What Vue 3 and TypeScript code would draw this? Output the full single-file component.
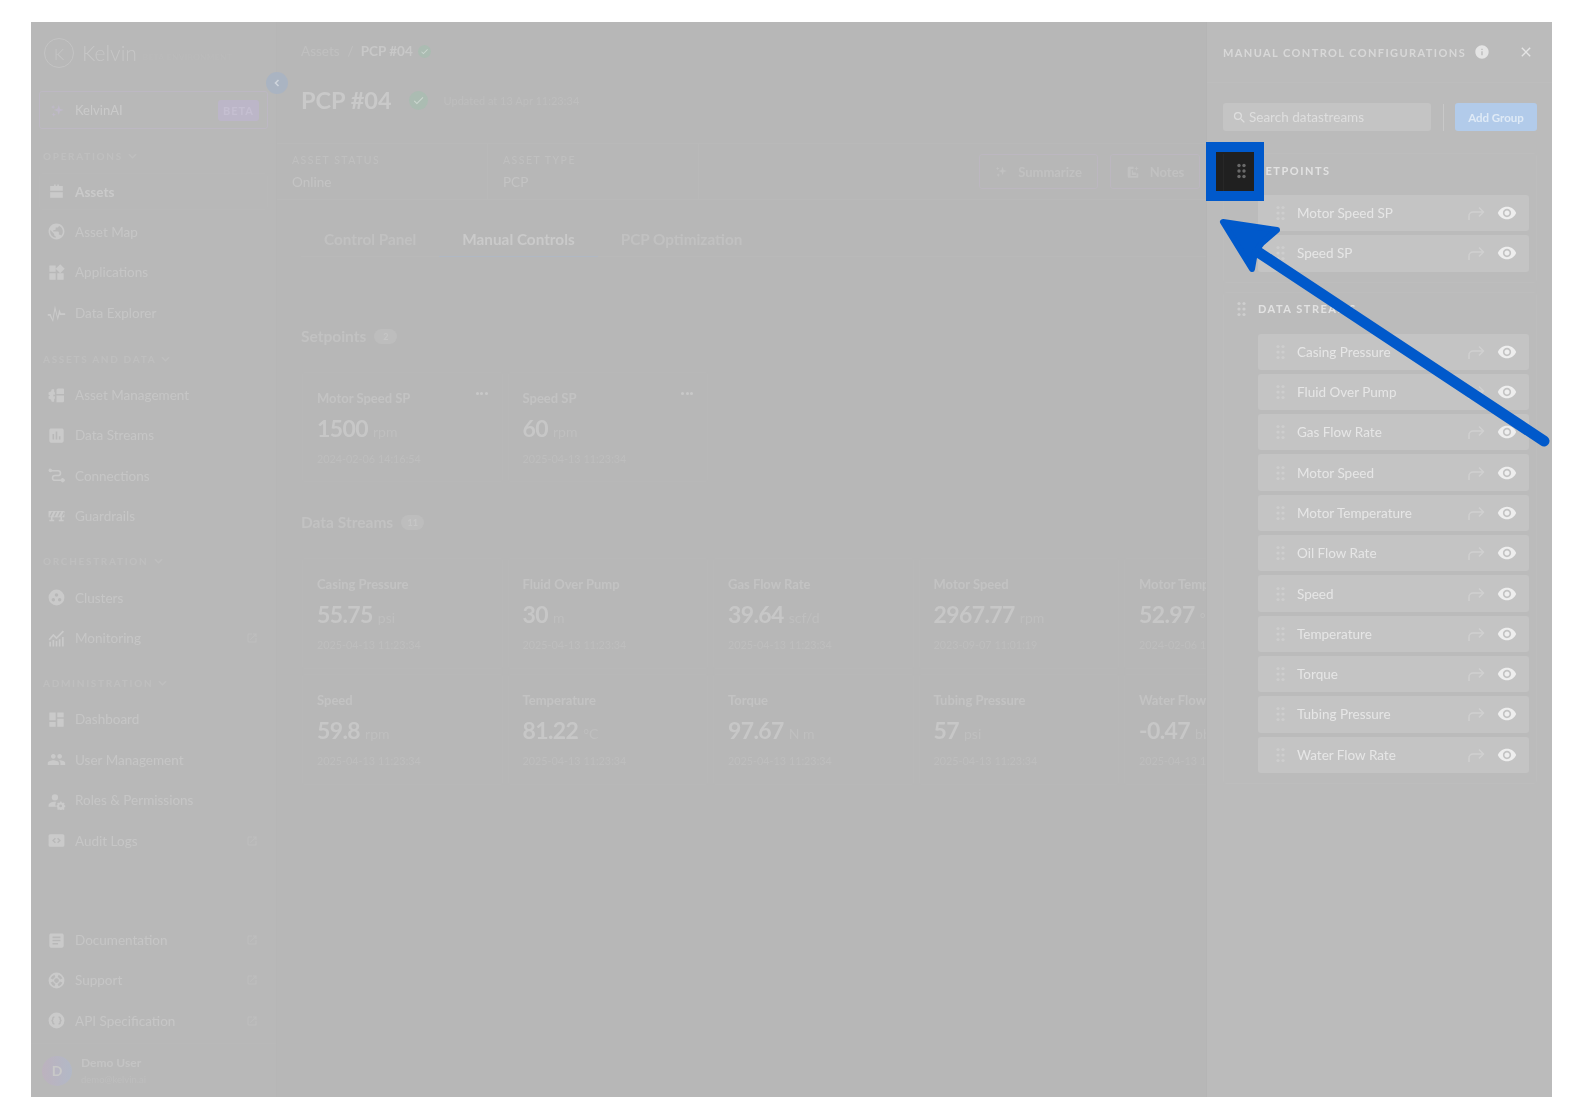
<script setup lang="ts">
interface NavItem { label: string; icon: string; ext?: boolean; active?: boolean }
interface NavSection { title: string; items: NavItem[] }
interface Reading { label: string; value: string; unit: string; date: string; menu?: boolean }

const icons: Record<string, string> = {
  assets: 'M9 3h2v2h2V3h2v2h5v6H4V5h5zM4 13h16v7H4z',
  globe: 'M12 2C6.48 2 2 6.48 2 12s4.48 10 10 10 10-4.48 10-10S17.52 2 12 2zm-1 17.93c-3.95-.49-7-3.85-7-7.93 0-.62.08-1.21.21-1.79L9 15v1c0 1.1.9 2 2 2v1.93zm6.9-2.54c-.26-.81-1-1.39-1.9-1.39h-1v-3c0-.55-.45-1-1-1H8v-2h2c.55 0 1-.45 1-1V7h2c1.1 0 2-.9 2-2v-.41c2.93 1.19 5 4.06 5 7.41 0 2.08-.8 3.97-2.1 5.39z',
  widgets: 'M13 13v8h8v-8h-8zM3 21h8v-8H3v8zM3 3v8h8V3H3zm13.66-1.31L11 7.34 16.66 13l5.66-5.66-5.66-5.65z',
  pulse: 'M1 14h3.6L7 20.5 10 3l3.4 14L15.6 8l1.9 5H23v2h-6.8l-.4-1.2-2.2 8.2L10.2 9 7.6 24 3.4 16H1z',
  manage: 'M14 3h6a1.5 1.5 0 0 1 1.5 1.5V10H12V5a2 2 0 0 1 2-2zM12 12h9.5v7a1.5 1.5 0 0 1-1.5 1.5h-8zM6 4h3v4h1v3H8v2h2v3H9v4H6l-1-3-3-1v-3l2-1-2-1V8l3-1z',
  bars: 'M19 3H5c-1.1 0-2 .9-2 2v14c0 1.1.9 2 2 2h14c1.1 0 2-.9 2-2V5c0-1.1-.9-2-2-2zM9 17H7v-7h2v7zm4 0h-2V7h2v10zm4 0h-2v-4h2v4z',
  connect: 'M4 3a2.5 2.5 0 0 1 2.4 2H14a4 4 0 0 1 0 8h-4a2 2 0 0 0 0 4h7.6a2.5 2.5 0 1 1 0 2H10a4 4 0 0 1 0-8h4a2 2 0 0 0 0-4H6.4A2.5 2.5 0 1 1 4 3z',
  barrier: 'M2 5h20v8H2zM5 13h2v3h2v2H3v-2h2zM17 13h2v3h2v2h-6v-2h2z M6 6l-3 6h2l3-6zM11 6l-3 6h2l3-6zM16 6l-3 6h2l3-6zM21 6l-3 6h2l3-6z',
  cluster: 'M12 2a10 10 0 1 0 0 20 10 10 0 0 0 0-20zm0 4.5a2.2 2.2 0 1 1 0 4.4 2.2 2.2 0 0 1 0-4.4zM8 12.5a2.2 2.2 0 1 1 0 4.4 2.2 2.2 0 0 1 0-4.4zm8 0a2.2 2.2 0 1 1 0 4.4 2.2 2.2 0 0 1 0-4.4z',
  monitor: 'M3 22v-6h2v6zM7 22v-8h2v8zM11 22v-7h2v7zM15 22v-9h2v9zM19 22V10h2v12zM2 13l6-7 4 4 8-8 1.5 1.5L12 13 8 9l-4.5 5.5z',
  dashboard: 'M3 13h8V3H3v10zm0 8h8v-6H3v6zm10 0h8V11h-8v10zm0-18v6h8V3h-8z',
  people: 'M16 11c1.66 0 2.99-1.34 2.99-3S17.66 5 16 5c-1.66 0-3 1.34-3 3s1.34 3 3 3zm-8 0c1.66 0 2.99-1.34 2.99-3S9.66 5 8 5C6.34 5 5 6.34 5 8s1.34 3 3 3zm0 2c-2.33 0-7 1.17-7 3.5V19h14v-2.5c0-2.33-4.67-3.5-7-3.5zm8 0c-.29 0-.62.02-.97.05 1.16.84 1.97 1.97 1.97 3.45V19h6v-2.5c0-2.33-4.67-3.5-7-3.5z',
  roles: 'M10 4a4 4 0 1 1 0 8 4 4 0 0 1 0-8zM2 20v-2c0-2.5 4-4.5 8-4.5.6 0 1.2 0 1.8.1A6 6 0 0 0 11.5 20zM18 13l.5 1.6 1.6.5.9-.6 1.2 1.2-.6 1 .5 1.3 1 .4v1.6l-1 .4-.5 1.3.6 1-1.2 1.2-1-.6-1.3.5-.4 1h-1.6l-.4-1-1.3-.5-1 .6-1.2-1.2.6-1-.5-1.3-1-.4v-1.6l1-.4.5-1.3-.6-1 1.2-1.2 1 .6 1.3-.5.4-1zm-.8 4a1.8 1.8 0 1 0 0 3.6 1.8 1.8 0 0 0 0-3.6z',
  code: 'M4 4h16a2 2 0 0 1 2 2v12a2 2 0 0 1-2 2H4a2 2 0 0 1-2-2V6a2 2 0 0 1 2-2zm6 4.5L6.5 12l3.5 3.5 1.2-1.2L8.9 12l2.3-2.3zm4 0-1.2 1.2 2.3 2.3-2.3 2.3 1.2 1.2 3.5-3.5z',
  article: 'M19 3H5c-1.1 0-2 .9-2 2v14c0 1.1.9 2 2 2h14c1.1 0 2-.9 2-2V5c0-1.1-.9-2-2-2zm-5 14H7v-2h7v2zm3-4H7v-2h10v2zm0-4H7V7h10v2z',
  ring: 'M12 2a10 10 0 1 0 0 20 10 10 0 0 0 0-20zm7.5 7.4-3 1.2a5 5 0 0 0-3-3l1.2-3a8 8 0 0 1 4.8 4.8zM12 15a3 3 0 1 1 0-6 3 3 0 0 1 0 6zM9.4 4.6l1.2 3a5 5 0 0 0-3 3l-3-1.2a8 8 0 0 1 4.8-4.8zM4.6 14.6l3-1.2a5 5 0 0 0 3 3l-1.2 3a8 8 0 0 1-4.8-4.8zm10 4.8-1.2-3a5 5 0 0 0 3-3l3 1.2a8 8 0 0 1-4.8 4.8z',
  api: 'M12 2a10 10 0 1 0 0 20 10 10 0 0 0 0-20zM9.5 7v1.5c-1 0-1.3.3-1.3 1v1.2c0 .6-.3 1-.9 1.3.6.3.9.7.9 1.3v1.2c0 .7.3 1 1.3 1V17c-2 0-3-.8-3-2.3v-1c0-.6-.3-.9-1-.9v-1.6c.7 0 1-.3 1-.9v-1C6.5 7.8 7.5 7 9.5 7zm5 0c2 0 3 .8 3 2.3v1c0 .6.3.9 1 .9v1.6c-.7 0-1 .3-1 .9v1c0 1.5-1 2.3-3 2.3v-1.5c1 0 1.3-.3 1.3-1v-1.2c0-.6.3-1 .9-1.3-.6-.3-.9-.7-.9-1.3V9.5c0-.7-.3-1-1.3-1z',
  ext: 'M19 19H5V5h7V3H5a2 2 0 00-2 2v14a2 2 0 002 2h14c1.1 0 2-.9 2-2v-7h-2v7zM14 3v2h3.59l-9.83 9.83 1.41 1.41L19 6.41V10h2V3h-7z',
  eye: 'M12 4.5C7 4.5 2.73 7.61 1 12c1.73 4.39 6 7.5 11 7.5s9.27-3.11 11-7.5c-1.73-4.39-6-7.5-11-7.5zM12 17c-2.76 0-5-2.24-5-5s2.24-5 5-5 5 2.24 5 5-2.24 5-5 5zm0-8c-1.66 0-3 1.34-3 3s1.34 3 3 3 3-1.34 3-3-1.34-3-3-3z',
  search: 'M15.5 14h-.79l-.28-.27A6.47 6.47 0 0 0 16 9.5 6.5 6.5 0 1 0 9.5 16c1.61 0 3.09-.59 4.23-1.57l.27.28v.79l5 4.99L20.49 19l-4.99-5zm-6 0C7.01 14 5 11.99 5 9.5S7.01 5 9.5 5 14 7.01 14 9.5 11.99 14 9.5 14z',
  close: 'M19 6.41 17.59 5 12 10.59 6.41 5 5 6.41 10.59 12 5 17.59 6.41 19 12 13.41 17.59 19 19 17.59 13.41 12z',
  info: 'M12 2C6.48 2 2 6.48 2 12s4.48 10 10 10 10-4.48 10-10S17.52 2 12 2zm1 15h-2v-6h2v6zm0-8h-2V7h2v2z',
  check: 'M9 16.2 4.8 12l-1.4 1.4L9 19 21 7l-1.4-1.4z',
  sparkle: 'M14 3l2 6 6 2-6 2-2 6-2-6-6-2 6-2zM5 3l1 2.5 2.5 1L6 7.5 5 10 4 7.5l-2.5-1L4 5.5zM6 15l1 2.5 2.5 1-2.5 1L6 22l-1-2.5-2.5-1 2.5-1z',
  notes: 'M5 3h8v4H8v12h10v-5h3v6a2 2 0 0 1-2 2H5a2 2 0 0 1-2-2V5a2 2 0 0 1 2-2zM10 9h2v8h-2zM12 13h5v4h-5zM18 2l1 3 3 1-3 1-1 3-1-3-3-1 3-1z',
}

const sections: NavSection[] = [
  { title: 'OPERATIONS', items: [
    { label: 'Assets', icon: 'assets', active: true },
    { label: 'Asset Map', icon: 'globe' },
    { label: 'Applications', icon: 'widgets' },
    { label: 'Data Explorer', icon: 'pulse' },
  ] },
  { title: 'ASSETS AND DATA', items: [
    { label: 'Asset Management', icon: 'manage' },
    { label: 'Data Streams', icon: 'bars' },
    { label: 'Connections', icon: 'connect' },
    { label: 'Guardrails', icon: 'barrier' },
  ] },
  { title: 'ORCHESTRATION', items: [
    { label: 'Clusters', icon: 'cluster' },
    { label: 'Monitoring', icon: 'monitor', ext: true },
  ] },
  { title: 'ADMINISTRATION', items: [
    { label: 'Dashboard', icon: 'dashboard' },
    { label: 'User Management', icon: 'people' },
    { label: 'Roles & Permissions', icon: 'roles' },
    { label: 'Audit Logs', icon: 'code', ext: true },
  ] },
]

const footerItems: NavItem[] = [
  { label: 'Documentation', icon: 'article', ext: true },
  { label: 'Support', icon: 'ring', ext: true },
  { label: 'API Specification', icon: 'api', ext: true },
]

const setpoints: Reading[] = [
  { label: 'Motor Speed SP', value: '1500', unit: 'rpm', date: '2024-02-06 14:16:54', menu: true },
  { label: 'Speed SP', value: '60', unit: 'rpm', date: '2025-04-13 11:23:34', menu: true },
]

const D = '2025-04-13 11:23:34'
const streams: Reading[] = [
  { label: 'Casing Pressure', value: '55.75', unit: 'psi', date: D },
  { label: 'Fluid Over Pump', value: '30', unit: 'm', date: D },
  { label: 'Gas Flow Rate', value: '39.64', unit: 'scf/d', date: D },
  { label: 'Motor Speed', value: '2967.77', unit: 'rpm', date: '2023-09-07 11:01:19' },
  { label: 'Motor Temperature', value: '52.97', unit: '°C', date: '2024-02-06 14:16:54' },
  { label: 'Speed', value: '59.8', unit: 'rpm', date: D },
  { label: 'Temperature', value: '81.22', unit: '°C', date: D },
  { label: 'Torque', value: '97.67', unit: 'N m', date: D },
  { label: 'Tubing Pressure', value: '57', unit: 'psi', date: D },
  { label: 'Water Flow Rate', value: '-0.47', unit: 'bbl/d', date: D },
]

const groups = [
  { title: 'SETPOINTS', items: ['Motor Speed SP', 'Speed SP'] },
  { title: 'DATA STREAMS', items: ['Casing Pressure', 'Fluid Over Pump', 'Gas Flow Rate', 'Motor Speed', 'Motor Temperature', 'Oil Flow Rate', 'Speed', 'Temperature', 'Torque', 'Tubing Pressure', 'Water Flow Rate'] },
]

const gripDots = [
  [3, 2.5], [8, 2.5], [3, 8], [8, 8], [3, 13.5], [8, 13.5],
]
</script>

<template>
  <div class="page">
    <div class="frame">
      <aside class="sidebar">
        <div class="logo">
          <span class="logo-mark">K</span>
          <span class="logo-word">Kelvin</span>
          <span class="logo-env">BETA ENVIRONMENT</span>
        </div>
        <div class="ai-box">
          <svg class="ai-icon" viewBox="0 0 24 24"><path :d="icons.sparkle" /></svg>
          <span class="ai-label">KelvinAI</span>
          <span class="ai-badge">BETA</span>
        </div>
        <div v-for="(s, si) in sections" :key="s.title" class="section" :class="'s' + si">
          <div class="section-title">
            {{ s.title }}
            <svg class="chev" viewBox="0 0 10 6"><path d="M1 1l4 4 4-4" /></svg>
          </div>
          <div v-for="it in s.items" :key="it.label" class="nav" :class="{ active: it.active }">
            <svg class="nav-icon" viewBox="0 0 24 24"><path :d="icons[it.icon]" /></svg>
            <span class="nav-label">{{ it.label }}</span>
            <svg v-if="it.ext" class="ext" viewBox="0 0 24 24"><path :d="icons.ext" /></svg>
          </div>
        </div>
        <div class="foot">
          <div v-for="it in footerItems" :key="it.label" class="nav">
            <svg class="nav-icon" viewBox="0 0 24 24"><path :d="icons[it.icon]" /></svg>
            <span class="nav-label">{{ it.label }}</span>
            <svg v-if="it.ext" class="ext" viewBox="0 0 24 24"><path :d="icons.ext" /></svg>
          </div>
        </div>
        <div class="user">
          <span class="avatar">D</span>
          <div class="user-text">
            <div class="user-name">Demo User</div>
            <div class="user-mail">demo@kelvin.ai</div>
          </div>
        </div>
        <span class="collapse">
          <svg viewBox="0 0 10 10"><path d="M6.5 2L3.5 5l3 3" /></svg>
        </span>
      </aside>

      <main class="main">
        <div class="crumbs">
          <span>Assets</span><span class="slash">/</span><b>PCP #04</b>
          <span class="ok small"><svg viewBox="0 0 24 24"><path :d="icons.check" /></svg></span>
        </div>
        <div class="title-row">
          <h1>PCP #04</h1>
          <span class="ok"><svg viewBox="0 0 24 24"><path :d="icons.check" /></svg></span>
          <span class="updated">Updated at 13 Apr 11:23:34</span>
        </div>
        <div class="info-bar">
          <div class="info-cell">
            <div class="info-key">ASSET STATUS</div>
            <div class="info-val">Online</div>
          </div>
          <div class="info-cell">
            <div class="info-key">ASSET TYPE</div>
            <div class="info-val">PCP</div>
          </div>
          <div class="actions">
            <span class="btn summarize"><svg viewBox="0 0 24 24"><path :d="icons.sparkle" /></svg>Summarize</span>
            <span class="btn notes"><svg viewBox="0 0 24 24"><path :d="icons.notes" /></svg>Notes</span>
          </div>
        </div>
        <div class="tabs">
          <span class="tab">Control Panel</span>
          <span class="tab on">Manual Controls</span>
          <span class="tab">PCP Optimization</span>
        </div>

        <div class="heading first-h">Setpoints <span class="count">2</span></div>
        <div class="cards">
          <div v-for="c in setpoints" :key="c.label" class="card sp">
            <div class="c-label">{{ c.label }}</div>
            <div class="c-value">{{ c.value }} <small>{{ c.unit }}</small></div>
            <div class="c-date">{{ c.date }}</div>
            <span v-if="c.menu" class="dots"><i></i><i></i><i></i></span>
          </div>
        </div>

        <div class="heading">Data Streams <span class="count">11</span></div>
        <div class="cards">
          <div v-for="c in streams" :key="c.label" class="card">
            <div class="c-label">{{ c.label }}</div>
            <div class="c-value">{{ c.value }} <small>{{ c.unit }}</small></div>
            <div class="c-date">{{ c.date }}</div>
          </div>
        </div>
      </main>

      <section class="panel">
        <header class="p-head">
          <span class="p-title">MANUAL CONTROL CONFIGURATIONS</span>
          <svg class="p-info" viewBox="0 0 24 24"><path :d="icons.info" /></svg>
          <svg class="p-close" viewBox="0 0 24 24"><path :d="icons.close" /></svg>
        </header>
        <div class="p-tools">
          <div class="search">
            <svg viewBox="0 0 24 24"><path :d="icons.search" /></svg>
            <span>Search datastreams</span>
          </div>
          <span class="tool-sep"></span>
          <span class="add">Add Group</span>
        </div>
        <div v-for="g in groups" :key="g.title" class="group">
          <div class="g-head">
            <svg class="grip" viewBox="0 0 11 16"><circle v-for="d in gripDots" :key="d.join()" :cx="d[0]" :cy="d[1]" r="1.6" /></svg>
            <span>{{ g.title }}</span>
          </div>
          <div class="g-items">
            <div v-for="name in g.items" :key="name" class="row">
              <svg class="grip" viewBox="0 0 11 16"><circle v-for="d in gripDots" :key="d.join()" :cx="d[0]" :cy="d[1]" r="1.6" /></svg>
              <span class="row-label">{{ name }}</span>
              <svg class="fwd" viewBox="0 0 20 20"><path d="M3 17v-4a4 4 0 0 1 4-4h10M13 4.5 17.5 9 13 13.5" /></svg>
              <svg class="eye" viewBox="0 0 24 24"><path :d="icons.eye" /></svg>
            </div>
          </div>
        </div>
      </section>
    </div>

    <div class="spot">
      <span class="spot-line"></span>
      <svg class="spot-grip" viewBox="0 0 11 16"><circle v-for="d in gripDots" :key="d.join()" :cx="d[0]" :cy="d[1]" r="1.7" /></svg>
    </div>
    <svg class="arrow" viewBox="0 0 1584 1120">
      <path class="shaft" d="M1252 248 1544 441" />
      <path class="head" d="M1223 222 1277 230 1262 243 1255 252 1252 269Z" />
    </svg>
  </div>
</template>

<style>
html, body { margin: 0; background: #fff; }
</style>

<style scoped>
.page {
  position: relative;
  width: 1584px;
  height: 1120px;
  box-sizing: border-box;
  padding: 22px 32px 23px 31px;
  font-family: Lato, "Liberation Sans", sans-serif;
  overflow: hidden;
}
.frame {
  display: flex;
  height: 100%;
  background: #b7b7b7;
  filter: blur(0.45px);
  overflow: hidden;
}
svg { display: block; fill: currentColor; }

/* sidebar */
.sidebar {
  position: relative;
  flex: 0 0 246px;
  box-sizing: border-box;
  display: flex;
  flex-direction: column;
  padding: 16px 8px 0;
  background: #b8b8b8;
  border-right: 1px solid #b6b6b6;
  color: #c8c8c8;
}
.logo { display: flex; align-items: center; height: 30px; margin-left: 5px; color: #c6c6c6; }
.logo-mark {
  width: 28px; height: 28px; border: 1px solid #c4c4c4; border-radius: 50%;
  display: flex; align-items: center; justify-content: center;
  font-size: 16px; font-weight: 300;
}
.logo-word { margin-left: 8px; font-size: 21px; font-weight: 300; line-height: 30px; }
.logo-env { margin-left: 6px; margin-top: 7px; font-size: 8px; letter-spacing: .6px; color: #bababa; white-space: nowrap; }
.ai-box {
  margin-top: 23px; height: 38px; box-sizing: border-box;
  display: flex; align-items: center; padding: 0 8px 0 10px;
  border: 1px solid #bdb8c3; border-radius: 3px;
}
.ai-icon { width: 15px; height: 15px; color: #bfb9c8; }
.ai-label { margin-left: 10px; font-size: 13px; color: #cacaca; }
.ai-badge {
  margin-left: auto; width: 41px; height: 21px; border-radius: 3px;
  background: #bcb6c8; color: #c5bfd1; font-size: 11px; font-weight: 700;
  letter-spacing: 1px; display: flex; align-items: center; justify-content: center;
}
.section { margin-top: 16px; }
.section.s0 { margin-top: 18px; }
.section.s1 { margin-top: 17px; }
.section-title {
  height: 18px; margin: 0 0 7px 4px; display: flex; align-items: center; gap: 5px;
  font-size: 10px; font-weight: 700; letter-spacing: 1.7px; color: #bfbfbf;
}
.s0 .section-title { margin-bottom: 8px; }
.chev { width: 9px; height: 6px; fill: none; stroke: #bfbfbf; stroke-width: 1.5; }
.nav { height: 40.4px; display: flex; align-items: center; padding: 0 10px 0 8px; box-sizing: border-box; }
.nav.active { height: 37px; margin: 1.7px 0; border: 1px solid #b9b9b9; border-radius: 3px; font-weight: 700; }
.nav.active .nav-icon { margin-left: -1px; }
.nav.active .nav-label { color: #cacaca; }
.nav-icon { width: 19px; height: 19px; flex: none; color: #cacaca; }
.nav-label { margin-left: 9px; font-size: 13.5px; color: #c6c6c6; white-space: nowrap; }
.ext { margin-left: auto; width: 12px; height: 12px; color: #bebebe; }
.foot { margin-top: auto; }
.user {
  height: 54px; margin: 2px -8px 0; padding-left: 11px; box-sizing: border-box;
  border-top: 1px solid #b9b9b9; display: flex; align-items: center; gap: 9px;
}
.avatar {
  width: 30px; height: 30px; border-radius: 50%;
  background: linear-gradient(90deg, #bcb2be, #b2b8c6);
  color: #c8c8c8; display: flex; align-items: center; justify-content: center;
  font-size: 14px; font-weight: 700;
}
.user-name { font-size: 12px; font-weight: 700; line-height: 14px; color: #c4c4c4; }
.user-mail { font-size: 9.5px; line-height: 13px; margin-top: 3px; color: #bebebe; }
.collapse {
  position: absolute; left: 235px; top: 50px; width: 22px; height: 22px; border-radius: 50%;
  background: #aab4c2; display: flex; align-items: center; justify-content: center;
}
.collapse svg { width: 10px; height: 10px; fill: none; stroke: #cfd5dc; stroke-width: 1.6; }

/* main */
.main { flex: 1 1 0; min-width: 0; overflow: hidden; color: #c6c6c6; }
.crumbs {
  margin: 20px 0 0 24px; height: 18px; display: flex; align-items: center;
  font-size: 13.5px; color: #c0c0c0;
}
.crumbs .slash { margin: 0 7px 0 8px; }
.crumbs b { color: #c8c8c8; font-weight: 700; }
.ok {
  width: 19px; height: 19px; border-radius: 50%; background: #abbcb2; color: #cbd6cf;
  display: flex; align-items: center; justify-content: center;
}
.ok svg { width: 13px; height: 13px; }
.ok.small { width: 13px; height: 13px; margin-left: 5px; }
.ok.small svg { width: 9px; height: 9px; }
.title-row { margin: 25px 0 0 24px; height: 30px; display: flex; align-items: center; }
.title-row h1 { margin: 0; font-size: 23.5px; font-weight: 700; color: #c9c9c9; white-space: nowrap; }
.title-row .ok { margin-left: 17px; }
.updated { margin-left: 16px; font-size: 11px; color: #bebebe; }
.info-bar {
  margin-top: 28px; height: 57px; box-sizing: border-box; display: flex; align-items: center;
  border-top: 1px solid #b9b9b9; border-bottom: 1px solid #b9b9b9;
}
.info-cell {
  flex: 0 0 211px; height: 100%; box-sizing: border-box; padding: 9px 0 0 15px;
  border-right: 1px solid #b9b9b9;
}
.info-key { font-size: 10.5px; letter-spacing: 1.5px; line-height: 14px; color: #c0c0c0; }
.info-val { margin-top: 7px; font-size: 13.5px; line-height: 16px; color: #c4c4c4; }
.actions { margin-left: auto; margin-right: 6px; display: flex; gap: 12px; }
.btn {
  height: 35px; box-sizing: border-box; display: flex; align-items: center; justify-content: center;
  gap: 10px; border: 1px solid #bcb7c0; border-radius: 3px; font-size: 13px; font-weight: 700; color: #c1c1c1;
}
.btn svg { width: 13px; height: 13px; }
.summarize { width: 119px; }
.notes { width: 90px; }
.notes svg { width: 14px; height: 14px; }
.tabs {
  margin: 24px 0 0 24px; height: 33px; box-sizing: border-box; display: flex;
  border-bottom: 1px solid #b9b9b9; font-size: 15.3px; font-weight: 700; color: #c1c1c1;
}
.tab { padding: 6px 23px 0; white-space: nowrap; height: 33px; box-sizing: border-box; }
.tab.on { color: #cacaca; border-bottom: 1px solid #b0b8c4; }
.heading {
  margin: 30px 0 0 24px; height: 20px; display: flex; align-items: center; gap: 8px;
  font-size: 15.5px; font-weight: 700; color: #c2c2c2;
}
.first-h { margin-top: 69px; }
.count {
  width: 23px; height: 15px; border-radius: 8px; background: #bdbdbd;
  font-size: 9px; color: #c6c6c6; display: flex; align-items: center; justify-content: center;
}
.cards {
  margin: 26px 0 0 25px; width: 1110px; display: grid;
  grid-template-columns: repeat(5, 200.5px); gap: 5px;
}
.card {
  position: relative; height: 111px; box-sizing: border-box; padding: 16px 0 0 14px;
  border: 1px solid #b8b8b8; border-radius: 2px; white-space: nowrap;
}
.card.sp { height: 110px; }
.c-label { font-size: 13px; line-height: 18px; font-weight: 700; color: #c3c3c3; }
.c-value { margin-top: 5px; line-height: 32px; font-size: 23px; font-weight: 700; color: #c7c7c7; letter-spacing: -.6px; }
.c-value small { font-size: 14px; font-weight: 400; letter-spacing: 0; color: #bfbfbf; }
.c-date { margin-top: 3px; font-size: 10.8px; line-height: 16px; color: #bebebe; }
.dots { position: absolute; right: 14px; top: 19px; display: flex; gap: 1.5px; }
.dots i { width: 3px; height: 3px; border-radius: 50%; background: #c8c8c8; }

/* panel */
.panel { flex: 0 0 346px; box-sizing: border-box; background: #bbbbbb; border-left: 1px solid #b5b5b5; color: #dedede; }
.p-head {
  height: 61px; box-sizing: border-box; display: flex; align-items: center; padding: 0 18px 0 16px;
  border-bottom: 1px solid #bdbdbd;
}
.p-title { font-size: 11px; font-weight: 700; letter-spacing: 1.4px; color: #d8d8d8; white-space: nowrap; }
.p-info { width: 16px; height: 16px; margin-left: 8px; color: #e4e4e4; }
.p-close { width: 16px; height: 16px; margin-left: auto; color: #e4e4e4; }
.p-tools { margin: 20px 15px 0 16px; display: flex; align-items: center; height: 28px; }
.search {
  width: 208px; height: 28px; box-sizing: border-box; padding-left: 9px;
  display: flex; align-items: center; gap: 2px; background: #c4c4c4; border-radius: 3px;
  font-size: 13.5px; color: #dedede;
}
.search svg { width: 15px; height: 15px; }
.tool-sep { width: 1px; height: 27px; margin: 0 11.5px; background: #c8c8c8; }
.add {
  width: 82px; height: 28px; border-radius: 3px; background: #b2cbea; color: #dfeaf6;
  font-size: 11.5px; font-weight: 700; display: flex; align-items: center; justify-content: center;
}
.group {
  margin: 9px 15px 0 16px; padding: 7px 7px 10px 34px; box-sizing: border-box;
  border: 1px solid #bdbdbd; border-radius: 3px;
}
.p-tools + .group { margin-top: 22px; }
.g-head { position: relative; height: 18px; margin-bottom: 16px; display: flex; align-items: center; font-size: 11px; font-weight: 700; letter-spacing: 1.5px; color: #e2e2e2; }
.g-head .grip { position: absolute; left: -22px; top: 1px; }
.grip { width: 11px; height: 16px; fill: #cecece; flex: none; }
.g-items { display: flex; flex-direction: column; gap: 4px; }
.row {
  height: 36.3px; box-sizing: border-box; display: flex; align-items: center; padding: 0 12px 0 17px;
  background: #c4c4c4; border-radius: 3px;
}
.row-label { margin-left: 11px; font-size: 13.5px; color: #e6e6e6; white-space: nowrap; }
.fwd { margin-left: auto; width: 20px; height: 20px; fill: none; stroke: #d0d0d0; stroke-width: 1.5; }
.eye { margin-left: 11px; width: 20px; height: 20px; color: #eeeeee; }

/* annotation */
.spot {
  position: absolute; left: 1206px; top: 142px; width: 58px; height: 59px; box-sizing: border-box;
  border: 10px solid #0059cb; background: #202020;
  display: flex; align-items: center; justify-content: center;
}
.spot-line { position: absolute; left: 7px; top: 2px; bottom: 0; width: 1px; background: #272727; }
.spot-grip { width: 11px; height: 16px; fill: #6a6a6a; margin-top: -1px; margin-left: 12px; }
.arrow { position: absolute; left: 0; top: 0; width: 1584px; height: 1120px; pointer-events: none; }
.shaft { fill: none; stroke: #0059cb; stroke-width: 11; stroke-linecap: round; }
.head { fill: #0059cb; stroke: #0059cb; stroke-width: 6; stroke-linejoin: round; }
</style>
